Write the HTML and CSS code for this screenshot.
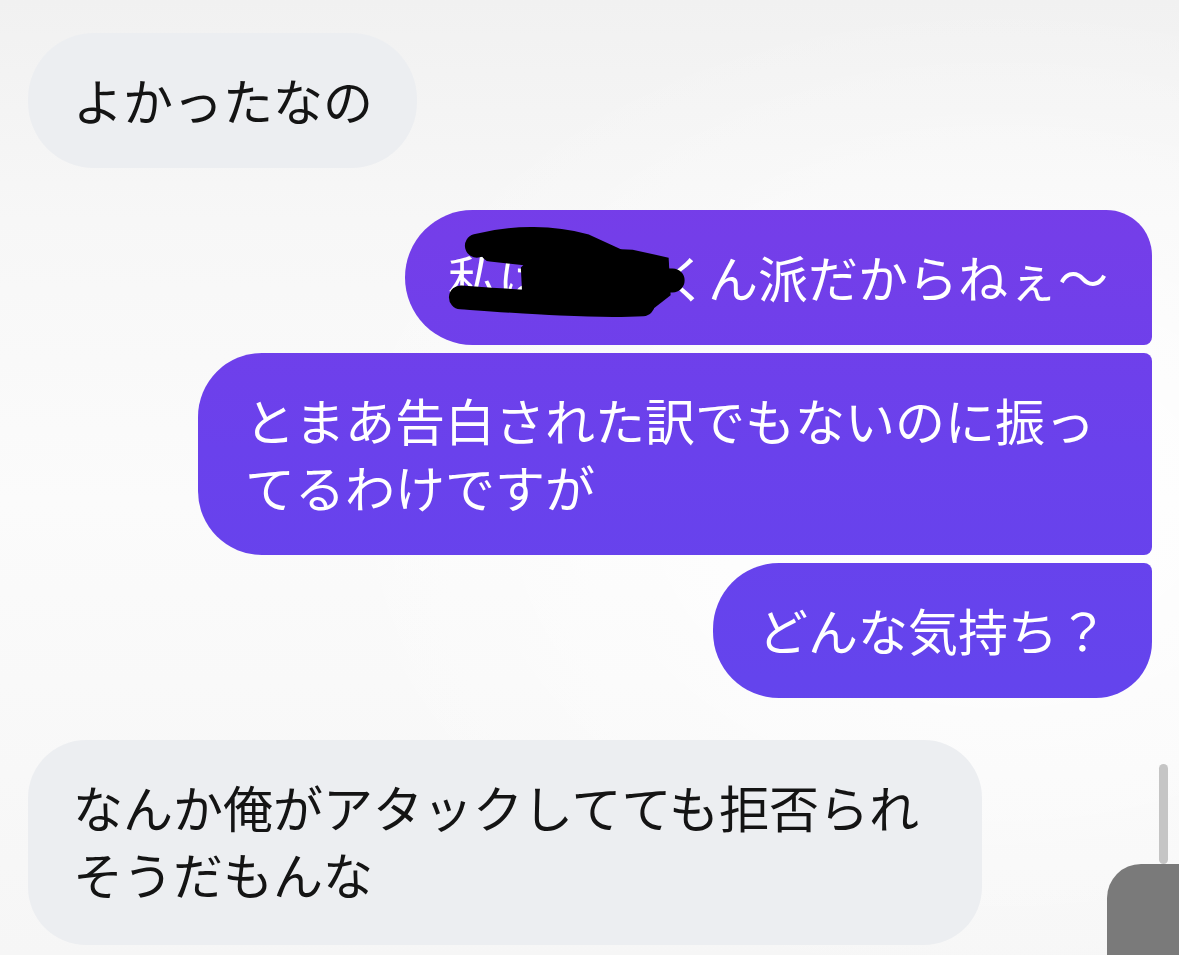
FILE: index.html
```html
<!DOCTYPE html>
<html lang="ja">
<head>
<meta charset="utf-8">
<title>Chat</title>
<link rel="stylesheet" href="styles.css">
</head>
<body>
<main class="chat">
  <section class="group in">
    <div class="bubble gray solo">よかったなの</div>
  </section>
  <section class="group out">
    <div class="bubble purple first redacted">私は<span class="name">〇〇</span>くん派だからねぇ〜<svg class="scribble" viewBox="0 0 748 136" preserveAspectRatio="none" aria-hidden="true"><g fill="none" stroke="#000" stroke-linecap="round" stroke-linejoin="round"><path d="M72 36 C110 26 150 28 180 36 L210 50" stroke-width="24"/><path d="M86 42 L196 54" stroke-width="20"/><path d="M132 70 L268 71" stroke-width="24"/><path d="M56 88 C112 92 190 98 238 95" stroke-width="24"/></g><polygon points="138,36 228,40 264,48 266,86 248,100 118,98 116,58" fill="#000"/></svg></div>
    <div class="bubble purple middle">とまあ告白された訳でもないのに振ってるわけですが</div>
    <div class="bubble purple last">どんな気持ち？</div>
  </section>
  <section class="group in">
    <div class="bubble gray solo tall">なんか俺がアタックしてても拒否られそうだもんな</div>
  </section>
</main>
<div class="scroll-thumb"></div>
<div class="corner-tab"></div>
</body>
</html>
```
FILE: styles.css
```css
html, body {
  margin: 0;
  padding: 0;
}

body {
  width: 1179px;
  height: 955px;
  overflow: hidden;
  background:
    radial-gradient(ellipse 700px 500px at 1000px 500px, #ffffff 0%, rgba(255,255,255,0) 100%),
    linear-gradient(180deg, #f1f1f1 0px, #f7f7f7 220px, #fbfbfb 500px, #f6f6f6 955px);
  font-family: "Noto Sans CJK JP", "Noto Sans", sans-serif;
  position: relative;
}

.chat {
  display: flex;
  flex-direction: column;
  gap: 42px;
  padding: 33px 27px 0 28px;
}

.group {
  display: flex;
  flex-direction: column;
  gap: 8px;
}

.group.in {
  align-items: flex-start;
}

.group.out {
  align-items: flex-end;
}

.bubble {
  box-sizing: border-box;
  max-width: 954px;
  padding: 33px 44px 35px 45px;
  font-size: 50px;
  line-height: 67px;
  border-radius: 66px;
  line-break: strict;
}

.gray {
  background: #eceef1;
  color: #141414;
}

.gray.solo {
  border-radius: 66px;
}

.gray.tall {
  padding-bottom: 38px;
  border-radius: 58px;
}

.purple {
  color: #ffffff;
  background: linear-gradient(180deg, #7a3ae8 0px, #743ee9 240px, #6a41ec 450px, #6444ed 680px, #5f46ee 955px) fixed;
}

.purple.first {
  border-radius: 68px 46px 8px 68px;
  padding-left: 43px;
}

.name {
  letter-spacing: 5px;
}

.purple.middle {
  border-radius: 64px 8px 8px 64px;
  padding-left: 47px;
}

.purple.last {
  border-radius: 66px 8px 56px 66px;
}

.redacted {
  position: relative;
}

.scribble {
  position: absolute;
  left: 0;
  top: 0;
  width: 100%;
  height: 100%;
  pointer-events: none;
}

.scroll-thumb {
  position: absolute;
  left: 1159px;
  top: 764px;
  width: 9px;
  height: 100px;
  border-radius: 5px;
  background: #c5c5c5;
}

.corner-tab {
  position: absolute;
  left: 1107px;
  top: 864px;
  width: 80px;
  height: 100px;
  border-top-left-radius: 34px;
  background: #7a7a7a;
}
```
